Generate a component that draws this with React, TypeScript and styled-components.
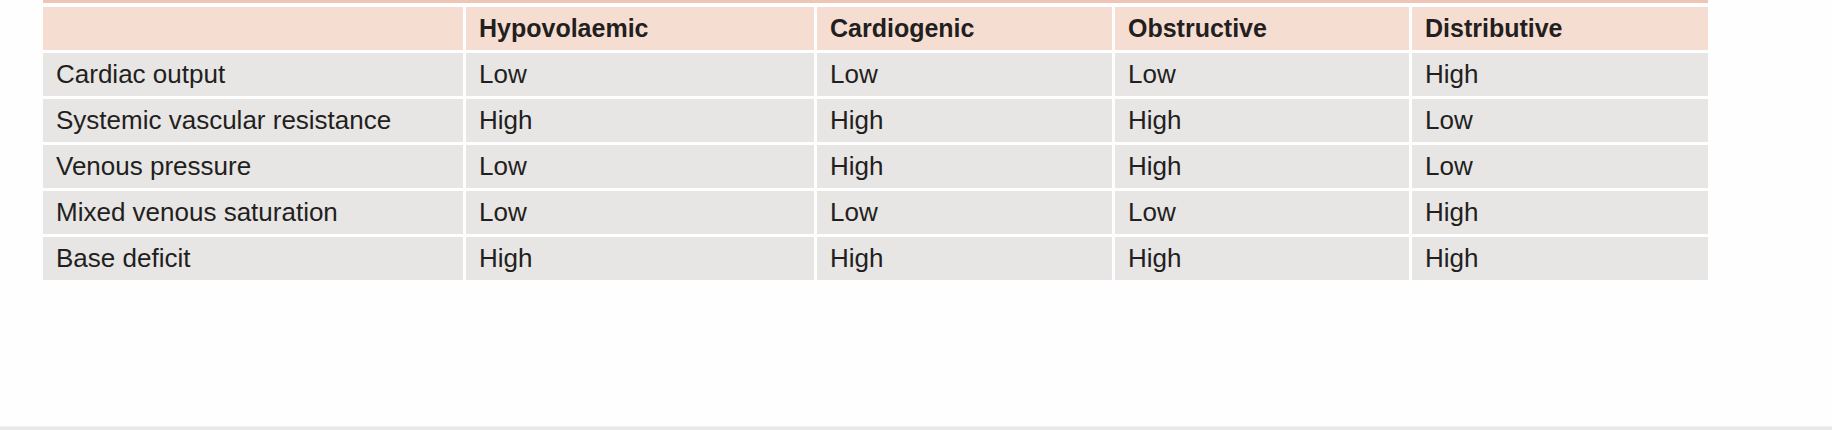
import styled, { createGlobalStyle } from "styled-components";

const GlobalStyle = createGlobalStyle`
  html, body {
    margin: 0;
    padding: 0;
    background: #fefefe;
  }
  body {
    font-family: "Liberation Sans", Arial, Helvetica, sans-serif;
    color: #231f20;
  }
`;

const Page = styled.div`
  height: 100vh;
  display: flex;
  flex-direction: column;
`;

const TableWrap = styled.div`
  width: 1665px;
  margin-left: 43px;
  display: flex;
  flex-direction: column;
  gap: 3px;
`;

const TopRule = styled.div`
  height: 3px;
  margin-bottom: 1px;
  background: #efc6b6;
`;

const Row = styled.div`
  display: grid;
  grid-template-columns: 420px 348px 295px 294px 296px;
  column-gap: 3px;
`;

const Cell = styled.div<{ $head?: boolean }>`
  height: 43px;
  display: flex;
  align-items: center;
  padding: 0 13px;
  font-size: ${(p) => (p.$head ? "25px" : "26px")};
  font-weight: ${(p) => (p.$head ? 700 : 400)};
  background: ${(p) => (p.$head ? "#f6ddd2" : "#e7e6e4")};
  white-space: nowrap;
`;

const Footer = styled.div`
  margin-top: auto;
  height: 3px;
  background: #e9e9e9;
  border-top: 1px solid #f2f2f2;
`;

const heads = ["", "Hypovolaemic", "Cardiogenic", "Obstructive", "Distributive"];

const rows = [
  ["Cardiac output", "Low", "Low", "Low", "High"],
  ["Systemic vascular resistance", "High", "High", "High", "Low"],
  ["Venous pressure", "Low", "High", "High", "Low"],
  ["Mixed venous saturation", "Low", "Low", "Low", "High"],
  ["Base deficit", "High", "High", "High", "High"],
];

const App = () => {
  return (
    <>
      <GlobalStyle />
      <Page>
        <TableWrap>
          <TopRule />
          <Row>
            {heads.map((h, i) => (
              <Cell $head key={i}>
                {h}
              </Cell>
            ))}
          </Row>
          {rows.map((r) => (
            <Row key={r[0]}>
              {r.map((c, i) => (
                <Cell key={i}>{c}</Cell>
              ))}
            </Row>
          ))}
        </TableWrap>
        <Footer />
      </Page>
    </>
  );
};

export default App;
